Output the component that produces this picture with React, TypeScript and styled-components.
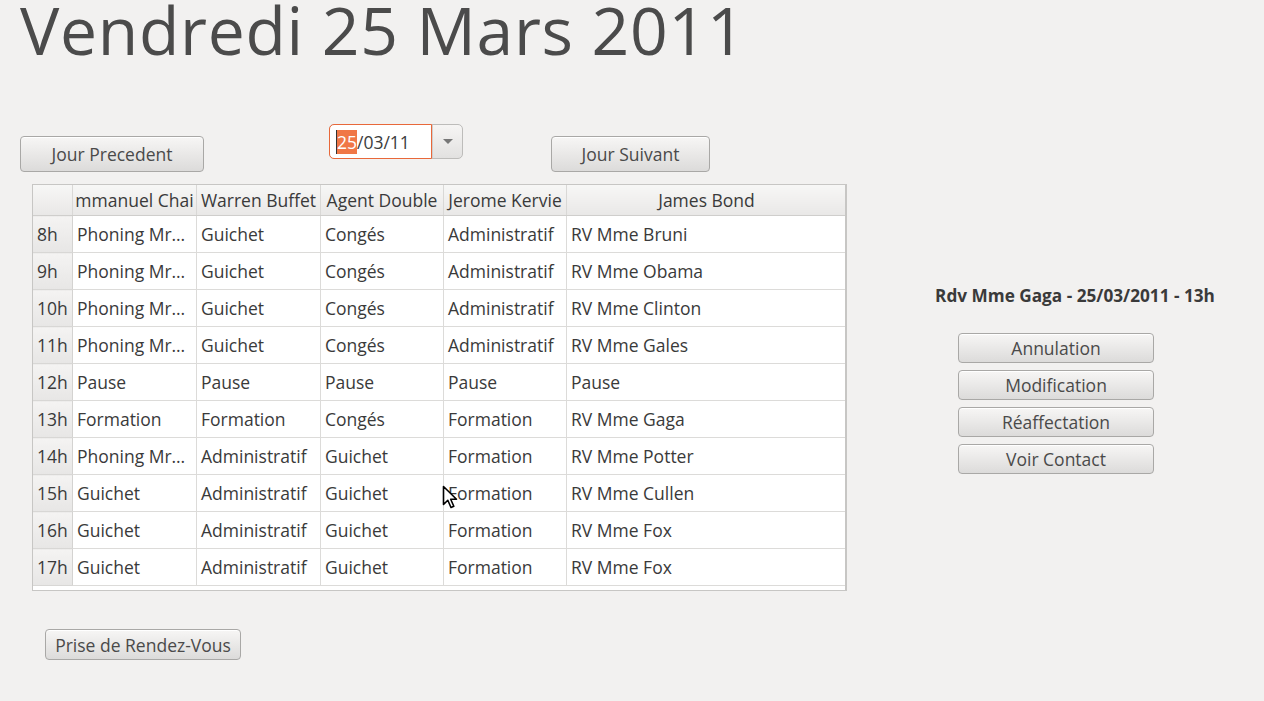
import React from "react";
import styled, { createGlobalStyle } from "styled-components";

const Global = createGlobalStyle`
  html, body { margin: 0; padding: 0; background: #f2f1f0; }
  body { font-family: "Open Sans", "Noto Sans", sans-serif; color: #3c3c3c; }
`;

const Page = styled.div`
  position: relative;
  width: 1264px;
  height: 701px;
  overflow: hidden;
  background: #f2f1f0;
`;

const Title = styled.h1`
  margin: 0;
  padding: 4px 0 0 20px;
  height: 80px;
  box-sizing: border-box;
  font-family: "Open Sans", sans-serif;
  font-weight: 400;
  font-size: 66px;
  line-height: 50px;
  color: #4b4b4b;
  letter-spacing: 0.7px;
  white-space: nowrap;
`;

const Main = styled.div`
  display: flex;
  align-items: flex-start;
  margin-top: 44px;
`;

const LeftCol = styled.div`
  display: flex;
  flex-direction: column;
  width: 860px;
`;

const Toolbar = styled.div`
  display: flex;
  align-items: flex-start;
  padding-left: 20px;
  height: 60px;
`;

const Button = styled.button<{ $w: number; $h?: number }>`
  width: ${(p) => p.$w}px;
  height: ${(p) => p.$h ?? 30}px;
  border: 1px solid #a9a8a6;
  border-radius: 4px;
  background: linear-gradient(#f7f6f5, #dcdbda);
  box-shadow: inset 0 1px 0 #ffffff;
  font-family: "Open Sans", sans-serif;
  font-size: 17.5px;
  color: #4a4a4a;
  padding: 0;
  cursor: default;
`;

const PrevButton = styled(Button)`
  margin-top: 12px;
`;

const NextButton = styled(Button)`
  margin-top: 12px;
  margin-left: 88px;
`;

const DateCombo = styled.div`
  display: flex;
  margin-left: 125px;
  height: 35px;
  width: 134px;
  border: 1px solid #bdbcba;
  border-radius: 5px;
  background: linear-gradient(#f6f5f4, #e2e1e0);
  box-sizing: border-box;
`;

const DateField = styled.div`
  display: flex;
  align-items: center;
  width: 103px;
  margin: -1px 0 -1px -1px;
  border: 1px solid #e8683a;
  border-radius: 5px 0 0 5px;
  background: #fff;
  box-sizing: border-box;
  padding-left: 6px;
  font-size: 17.5px;
  color: #3c3c3c;
`;

const Selected = styled.span`
  background: #f07746;
  color: #fff;
  border-left: 1px solid #333;
`;

const DropBtn = styled.div`
  flex: 1;
  display: flex;
  align-items: center;
  justify-content: center;
  border-left: 1px solid #cfcecd;
`;

const Arrow = styled.div`
  width: 0;
  height: 0;
  border-left: 5px solid transparent;
  border-right: 5px solid transparent;
  border-top: 5px solid #777;
`;

const TableFrame = styled.div`
  margin-left: 32px;
  width: 815px;
  height: 407px;
  border: 1px solid #c7c6c4;
  border-right: 2px solid #c7c6c4;
  box-sizing: border-box;
  background: #fff;
  overflow: hidden;
`;

const Grid = styled.table`
  border-collapse: collapse;
  table-layout: fixed;
  width: 812px;
  font-family: "Open Sans", sans-serif;
  font-size: 17.5px;
  color: #3a3a3a;
`;

const HeadCell = styled.th<{ $w: number }>`
  width: ${(p) => p.$w}px;
  height: 30px;
  padding: 0;
  font-weight: 400;
  text-align: center;
  white-space: nowrap;
  overflow: hidden;
  background: linear-gradient(#f7f7f6, #e9e8e7);
  border-right: 1px solid #d9d8d6;
  border-bottom: 1px solid #cfcecc;
  &:last-child { border-right: none; }
`;

const RowHead = styled.th`
  height: 36px;
  padding: 0 0 0 4px;
  font-weight: 400;
  text-align: left;
  background: linear-gradient(#f4f3f2, #e7e6e5);
  border-right: 1px solid #d4d3d1;
  border-bottom: 1px solid #d8d7d5;
`;

const Cell = styled.td`
  height: 36px;
  padding: 0 0 0 4px;
  white-space: nowrap;
  overflow: hidden;
  border-right: 1px solid #dcdbd9;
  border-bottom: 1px solid #dcdbd9;
  &:last-child { border-right: none; }
`;

const BottomRow = styled.div`
  padding: 38px 0 0 45px;
`;

const Side = styled.div`
  display: flex;
  flex-direction: column;
  align-items: center;
  padding-top: 160px;
  width: 340px;
  margin-left: 45px;
`;

const Label = styled.div`
  font-family: "Open Sans", sans-serif;
  font-weight: 700;
  font-size: 17.2px;
  color: #3a3a3a;
  height: 48px;
  line-height: 24px;
  white-space: nowrap;
`;

const ActionList = styled.div`
  display: flex;
  flex-direction: column;
  gap: 7px;
  margin-left: -38px;
  margin-top: 1px;
`;

const Cursor = styled.svg`
  position: absolute;
  left: 442px;
  top: 485px;
`;

const heads: [string, number][] = [
  ["", 39],
  ["mmanuel Chai", 123],
  ["Warren Buffet", 123],
  ["Agent Double", 122],
  ["Jerome Kervie", 122],
  ["James Bond", 279],
];

const rows: string[][] = [
  ["8h", "Phoning Mr…", "Guichet", "Congés", "Administratif", "RV Mme Bruni"],
  ["9h", "Phoning Mr…", "Guichet", "Congés", "Administratif", "RV Mme Obama"],
  ["10h", "Phoning Mr…", "Guichet", "Congés", "Administratif", "RV Mme Clinton"],
  ["11h", "Phoning Mr…", "Guichet", "Congés", "Administratif", "RV Mme Gales"],
  ["12h", "Pause", "Pause", "Pause", "Pause", "Pause"],
  ["13h", "Formation", "Formation", "Congés", "Formation", "RV Mme Gaga"],
  ["14h", "Phoning Mr…", "Administratif", "Guichet", "Formation", "RV Mme Potter"],
  ["15h", "Guichet", "Administratif", "Guichet", "Formation", "RV Mme Cullen"],
  ["16h", "Guichet", "Administratif", "Guichet", "Formation", "RV Mme Fox"],
  ["17h", "Guichet", "Administratif", "Guichet", "Formation", "RV Mme Fox"],
];

export default function App() {
  return (
    <Page>
      <Global />
      <Title>Vendredi 25 Mars 2011</Title>
      <Main>
        <LeftCol>
          <Toolbar>
            <PrevButton $w={184} $h={36}>Jour Precedent</PrevButton>
            <DateCombo>
              <DateField>
                <Selected>25</Selected>/03/11
              </DateField>
              <DropBtn>
                <Arrow />
              </DropBtn>
            </DateCombo>
            <NextButton $w={159} $h={36}>Jour Suivant</NextButton>
          </Toolbar>
          <TableFrame>
            <Grid>
              <thead>
                <tr>
                  {heads.map(([h, w], i) => (
                    <HeadCell key={i} $w={w}>{h}</HeadCell>
                  ))}
                </tr>
              </thead>
              <tbody>
                {rows.map((r) => (
                  <tr key={r[0]}>
                    <RowHead>{r[0]}</RowHead>
                    {r.slice(1).map((c, i) => (
                      <Cell key={i}>{c}</Cell>
                    ))}
                  </tr>
                ))}
              </tbody>
            </Grid>
          </TableFrame>
          <BottomRow>
            <Button $w={196} $h={31}>Prise de Rendez-Vous</Button>
          </BottomRow>
        </LeftCol>
        <Side>
          <Label>Rdv Mme Gaga - 25/03/2011 - 13h</Label>
          <ActionList>
            <Button $w={196}>Annulation</Button>
            <Button $w={196}>Modification</Button>
            <Button $w={196}>Réaffectation</Button>
            <Button $w={196}>Voir Contact</Button>
          </ActionList>
        </Side>
      </Main>
      <Cursor width="16" height="25" viewBox="0 0 16 25">
        <path d="M1.5 1.5 L1.5 19.5 L5.8 15.3 L9 22.5 L11.8 21.3 L8.7 14.2 L14.5 14.2 Z" fill="#fff" stroke="#000" strokeWidth="1.6" strokeLinejoin="round" />
      </Cursor>
    </Page>
  );
}
